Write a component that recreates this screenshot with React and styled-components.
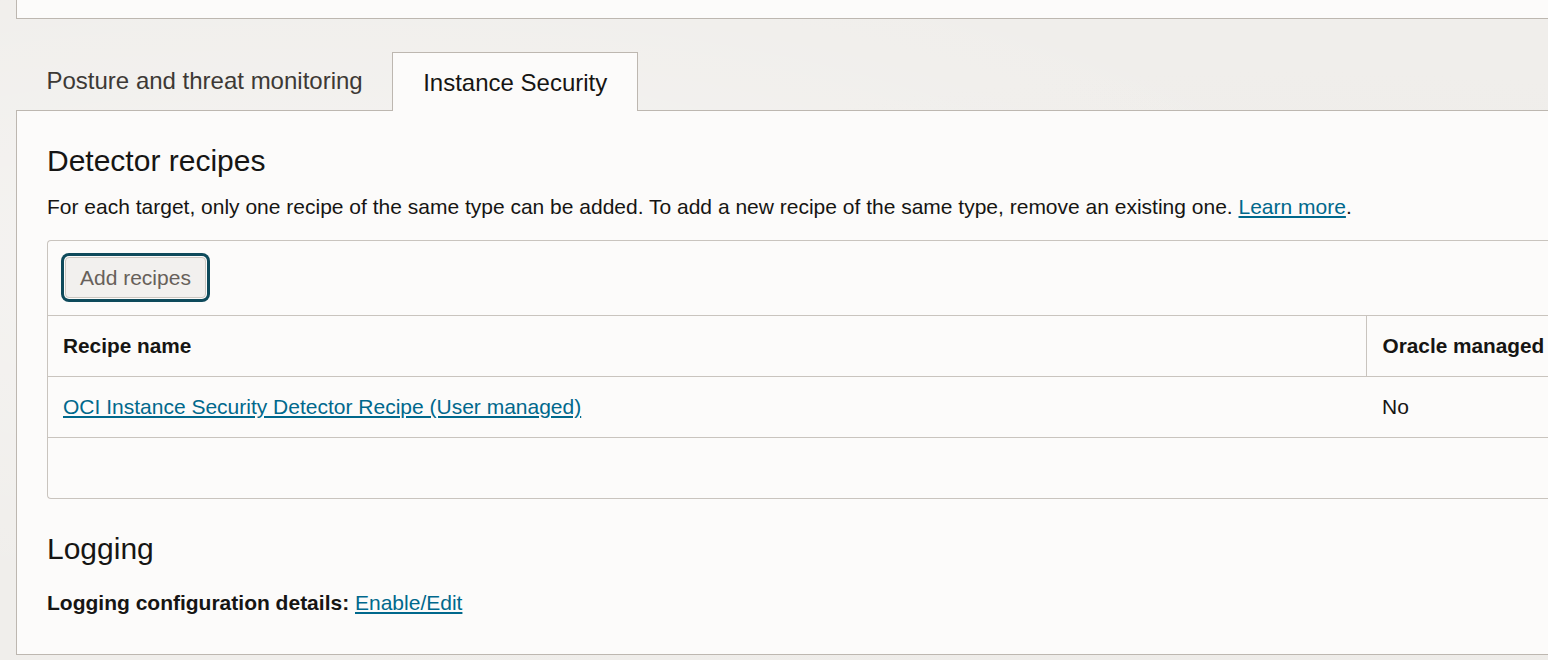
import React from "react";
import styled, { createGlobalStyle } from "styled-components";

const Global = createGlobalStyle`
  html, body { margin: 0; padding: 0; }
  body {
    background: #f0eeeb;
    font-family: "Liberation Sans", Arial, sans-serif;
    color: #161513;
    overflow: hidden;
    width: 1548px;
    height: 660px;
  }
`;

const Page = styled.div`
  display: flex;
  flex-direction: column;
  padding-left: 16px;
  width: 1600px;
  background:
    radial-gradient(ellipse at 20% 40%, rgba(255,255,255,0.35), transparent 60%),
    radial-gradient(ellipse at 80% 70%, rgba(230,227,223,0.4), transparent 60%),
    #f0eeeb;
  min-height: 660px;
`;

const TopCard = styled.div`
  box-sizing: border-box;
  height: 19px;
  background: #fcfbfa;
  border-left: 1px solid #bdb7b0;
  border-bottom: 1px solid #bdb7b0;
`;

const TabList = styled.div`
  display: flex;
  align-items: flex-end;
  margin-top: 33px;
  height: 58px;
  position: relative;
  z-index: 1;
`;

const Tab = styled.div`
  box-sizing: border-box;
  font-size: 24px;
  line-height: 28px;
  padding: 0 ${(p) => (p.$active ? "30px" : "30.5px")};
  color: ${(p) => (p.$active ? "#161513" : "#3d3935")};
  height: ${(p) => (p.$active ? "59px" : "58px")};
  display: flex;
  align-items: center;
  white-space: nowrap;
  ${(p) =>
    p.$active
      ? `
    background: #fcfbfa;
    border: 1px solid #bdb7b0;
    border-bottom: none;
    margin-bottom: -1px;
    margin-left: -1px;
    padding-top: 2px;
  `
      : `
    padding-bottom: 1px;
  `}
`;

const Panel = styled.div`
  background: #fcfbfa;
  border-top: 1px solid #bdb7b0;
  border-left: 1px solid #bdb7b0;
  border-bottom: 1px solid #bdb7b0;
  padding: 0 0 39px 30px;
`;

const Heading = styled.h2`
  margin: 32px 0 0;
  font-size: 30px;
  line-height: 36px;
  font-weight: 400;
  color: #161513;
`;

const Description = styled.p`
  margin: 16px 0 0;
  font-size: 21px;
  line-height: 24px;
`;

const Link = styled.a`
  color: #00688c;
  text-decoration: underline;
  text-underline-offset: 2px;
  cursor: pointer;
`;

const TableBox = styled.div`
  margin-top: 21px;
  border: 1px solid #c9c4be;
  border-right: none;
  border-radius: 4px 0 0 4px;
  overflow: hidden;
`;

const Toolbar = styled.div`
  display: flex;
  align-items: center;
  padding: 16px 0 17px 17px;
  border-bottom: 1px solid #c9c4be;
`;

const Button = styled.button`
  box-sizing: border-box;
  height: 41px;
  padding: 0 14px;
  font-family: inherit;
  font-size: 21px;
  color: #67605a;
  background: #f2f0ee;
  border: 1px solid #cdc7c1;
  border-radius: 4px;
  box-shadow: 0 0 0 1px #fcfbfa, 0 0 0 4px #0e4a5b;
  cursor: pointer;
`;

const Table = styled.table`
  border-collapse: collapse;
  table-layout: fixed;
  width: 1800px;
`;

const HeadCell = styled.th`
  text-align: left;
  font-size: 20.8px;
  font-weight: 700;
  height: 60px;
  padding: 0 16px 0 ${(p) => (p.$first ? "15px" : "16px")};
  border-bottom: 1px solid #c9c4be;
  border-right: ${(p) => (p.$first ? "1px solid #c9c4be" : "none")};
`;

const Cell = styled.td`
  font-size: 21px;
  height: 60px;
  padding: 0 16px 0 ${(p) => (p.$first ? "15px" : "16px")};
  border-bottom: ${(p) => (p.$last ? "none" : "1px solid #c9c4be")};
`;

const Details = styled.div`
  margin-top: 24px;
  font-size: 21px;
  line-height: 24px;
`;

const Label = styled.span`
  font-weight: 700;
`;

export default function App() {
  return (
    <>
      <Global />
      <Page>
        <TopCard />
        <TabList>
          <Tab>Posture and threat monitoring</Tab>
          <Tab $active>Instance Security</Tab>
        </TabList>
        <Panel>
          <Heading>Detector recipes</Heading>
          <Description>
            For each target, only one recipe of the same type can be added. To add a new recipe of
            the same type, remove an existing one. <Link>Learn more</Link>.
          </Description>
          <TableBox>
            <Toolbar>
              <Button>Add recipes</Button>
            </Toolbar>
            <Table>
              <colgroup>
                <col style={{ width: 1318 }} />
                <col />
              </colgroup>
              <thead>
                <tr>
                  <HeadCell $first>Recipe name</HeadCell>
                  <HeadCell>Oracle managed</HeadCell>
                </tr>
              </thead>
              <tbody>
                <tr>
                  <Cell $first>
                    <Link>OCI Instance Security Detector Recipe (User managed)</Link>
                  </Cell>
                  <Cell>No</Cell>
                </tr>
                <tr>
                  <Cell $first $last></Cell>
                  <Cell $last></Cell>
                </tr>
              </tbody>
            </Table>
          </TableBox>
          <Heading>Logging</Heading>
          <Details>
            <Label>Logging configuration details:</Label> <Link>Enable/Edit</Link>
          </Details>
        </Panel>
      </Page>
    </>
  );
}
